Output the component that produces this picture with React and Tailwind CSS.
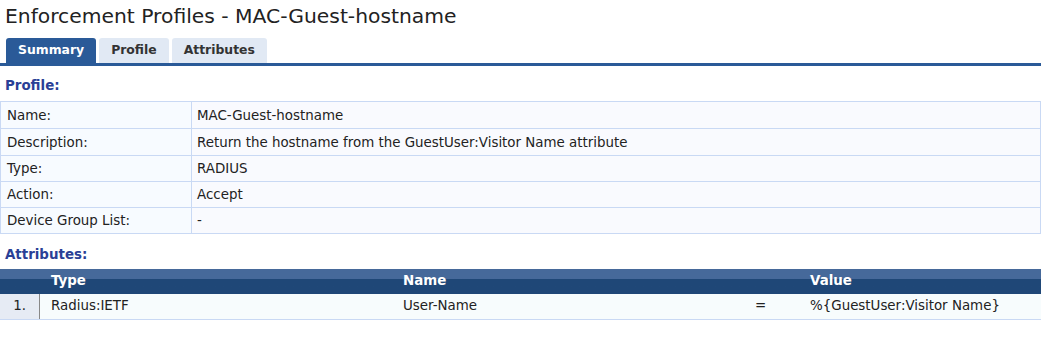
import React from 'react';

const profileRows = [
    { label: 'Name:', value: 'MAC-Guest-hostname', h: 'h-[27px]' },
    { label: 'Description:', value: 'Return the hostname from the GuestUser:Visitor Name attribute', h: 'h-[27px]' },
    { label: 'Type:', value: 'RADIUS', h: 'h-[26px]' },
    { label: 'Action:', value: 'Accept', h: 'h-[26px]' },
    { label: 'Device Group List:', value: '-', h: 'h-[26px]' },
];

const tabs = ['Summary', 'Profile', 'Attributes'];

const App = () => {
    return (
        <div className="w-[1041px] h-[341px] bg-white text-[#222] text-[13.4px] overflow-hidden" style={{ fontFamily: '"DejaVu Sans", Verdana, sans-serif' }}>
            <h1 className="pl-[5px] pt-[3px] h-[38px] text-[20.3px] leading-[26px] text-[#222]">Enforcement Profiles - MAC-Guest-hostname</h1>

            <div className="flex items-end gap-[3px] pl-[6px] border-b-[3px] border-[#2a5a98]">
                {tabs.map((t, i) => (
                    <div
                        key={t}
                        className={`h-[25px] px-[12px] rounded-t-[3px] flex items-center text-[12.4px] font-bold ${i === 0 ? 'bg-[#2a5a98] text-white' : 'bg-[#e1e9f4] text-[#333]'}`}
                    >
                        {t}
                    </div>
                ))}
            </div>

            <div className="pl-[5px] pt-[10px] h-[35px] text-[13.4px] font-bold text-[#2a3f96]">Profile:</div>

            <table className="w-full border-collapse">
                <tbody>
                    {profileRows.map(r => (
                        <tr key={r.label} className={r.h}>
                            <td className="w-[191px] border border-[#c9d9f4] bg-[#f7fbff] px-[6px] py-0 leading-[25px]">{r.label}</td>
                            <td className="border border-[#c9d9f4] bg-[#f9fafe] px-[5px] py-0 leading-[25px]">{r.value}</td>
                        </tr>
                    ))}
                </tbody>
            </table>

            <div className="pl-[5px] pt-[11px] h-[35px] text-[13.4px] font-bold text-[#2a3f96]">Attributes:</div>

            <div className="flex h-[25px] items-center text-white font-bold text-[13.4px] bg-gradient-to-b from-[#46699a] from-40% to-[#1f4777] to-40%">
                <div className="w-[51px]" />
                <div className="w-[352px]">Type</div>
                <div className="w-[407px]">Name</div>
                <div>Value</div>
            </div>
            <div className="flex h-[26px] items-center border-b border-[#c9d9f4] bg-[#f7fcfd]">
                <div className="w-[40px] h-full bg-[#e6ebf4] border-r border-[#888] flex items-center justify-end pr-[13px]">1.</div>
                <div className="w-[363px] pl-[11px]">Radius:IETF</div>
                <div className="w-[352px]">User-Name</div>
                <div className="w-[55px]">=</div>
                <div>%{'{'}GuestUser:Visitor Name{'}'}</div>
            </div>
        </div>
    );
};

export default App;
